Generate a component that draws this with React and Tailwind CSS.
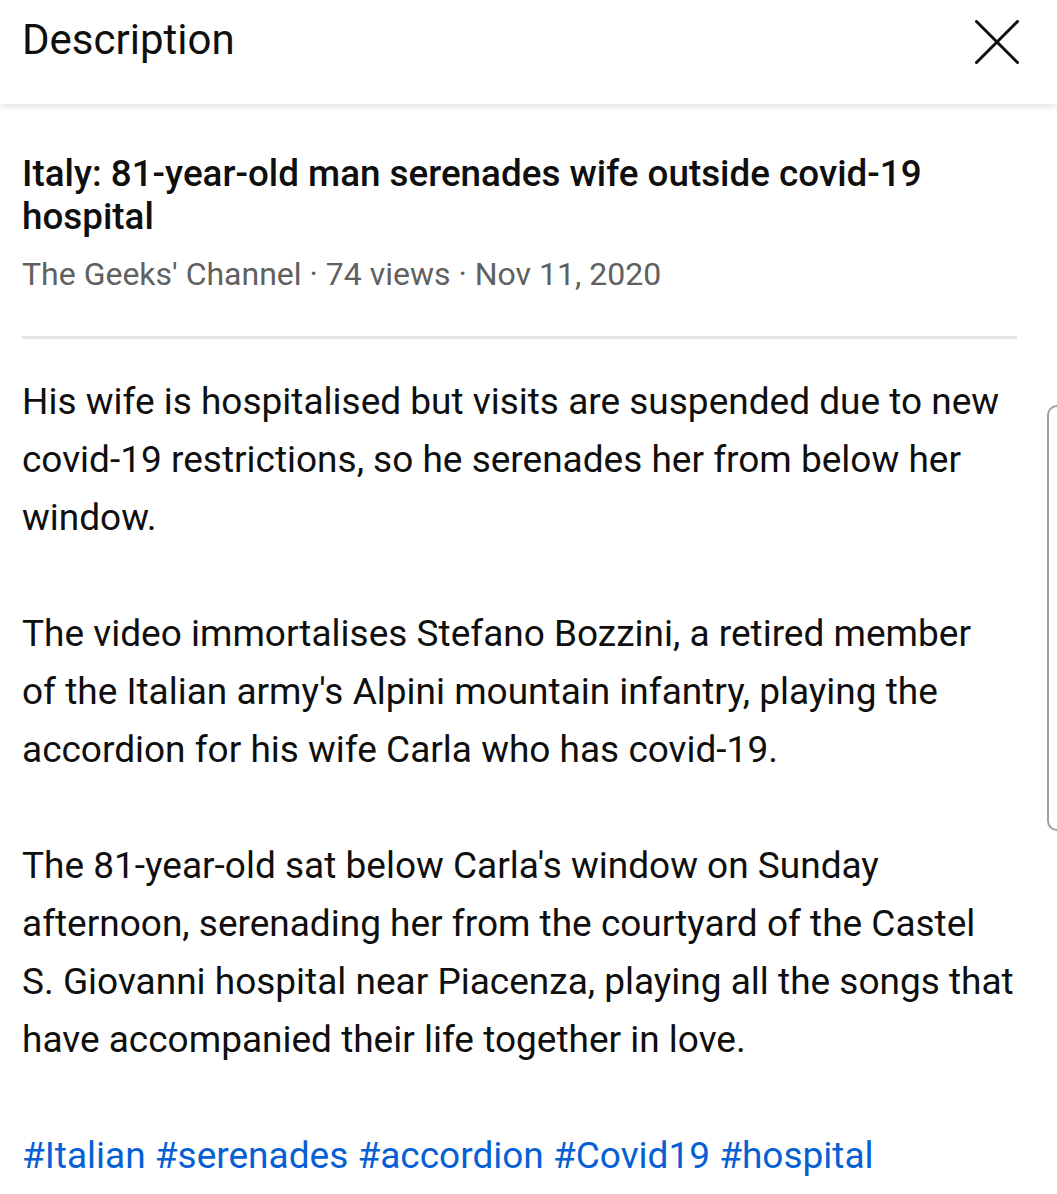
import React from 'react';

const paragraphs = [
  'His wife is hospitalised but visits are suspended due to new covid-19 restrictions, so he serenades her from below her window.',
  "The video immortalises Stefano Bozzini, a retired member of the Italian army's Alpini mountain infantry, playing the accordion for his wife Carla who has covid-19.",
  "The 81-year-old sat below Carla's window on Sunday afternoon, serenading her from the courtyard of the Castel S. Giovanni hospital near Piacenza, playing all the songs that have accompanied their life together in love.",
];

const tags = ['#Italian', '#serenades', '#accordion', '#Covid19', '#hospital'];

export default function App() {
  return (
    <div
      className="relative w-[1057px] h-[1194px] overflow-hidden bg-white text-[#0f0f0f]"
      style={{ fontFamily: 'Roboto, "Liberation Sans", sans-serif' }}
    >
      {/* Header */}
      <div className="h-[104px] flex items-start justify-between pl-[22px] pr-[38px] shadow-[0_3px_6px_rgba(0,0,0,0.1)] relative z-10">
        <h1 className="text-[42px] leading-[1] mt-[19px] font-normal">Description</h1>
        <button className="mt-[20px]">
          <svg width="44" height="44" viewBox="0 0 44 44">
            <path d="M1.5 1.5 L42.5 42.5 M42.5 1.5 L1.5 42.5" stroke="#0f0f0f" strokeWidth="3" strokeLinecap="round" />
          </svg>
        </button>
      </div>

      <div className="pl-[22px] pr-[40px]">
        {/* Title */}
        <h2 className="mt-[48px] text-[36.8px] leading-[43px] font-medium">
          Italy: 81-year-old man serenades wife outside covid-19 hospital
        </h2>
        <div className="mt-[16px] text-[32px] leading-[40px] text-[#606060]">
          The Geeks' Channel · 74 views · Nov 11, 2020
        </div>

        <div className="mt-[42px] h-[3px] bg-[#e5e5e5]" />

        {/* Body */}
        <div className="mt-[34px] mr-[3px] text-[37px] leading-[58px]">
          {paragraphs.map((p, i) => (
            <p key={i} className="mb-[58px]">{p}</p>
          ))}
          <p className="text-[#065fd4]">{tags.join(' ')}</p>
        </div>
      </div>

      {/* fast scroll handle */}
      <div className="absolute right-0 top-[405px] w-[10px] h-[426px] border-l-2 border-t-2 border-b-2 border-[#9e9e9e] rounded-l-[10px] bg-white" />
    </div>
  );
}
